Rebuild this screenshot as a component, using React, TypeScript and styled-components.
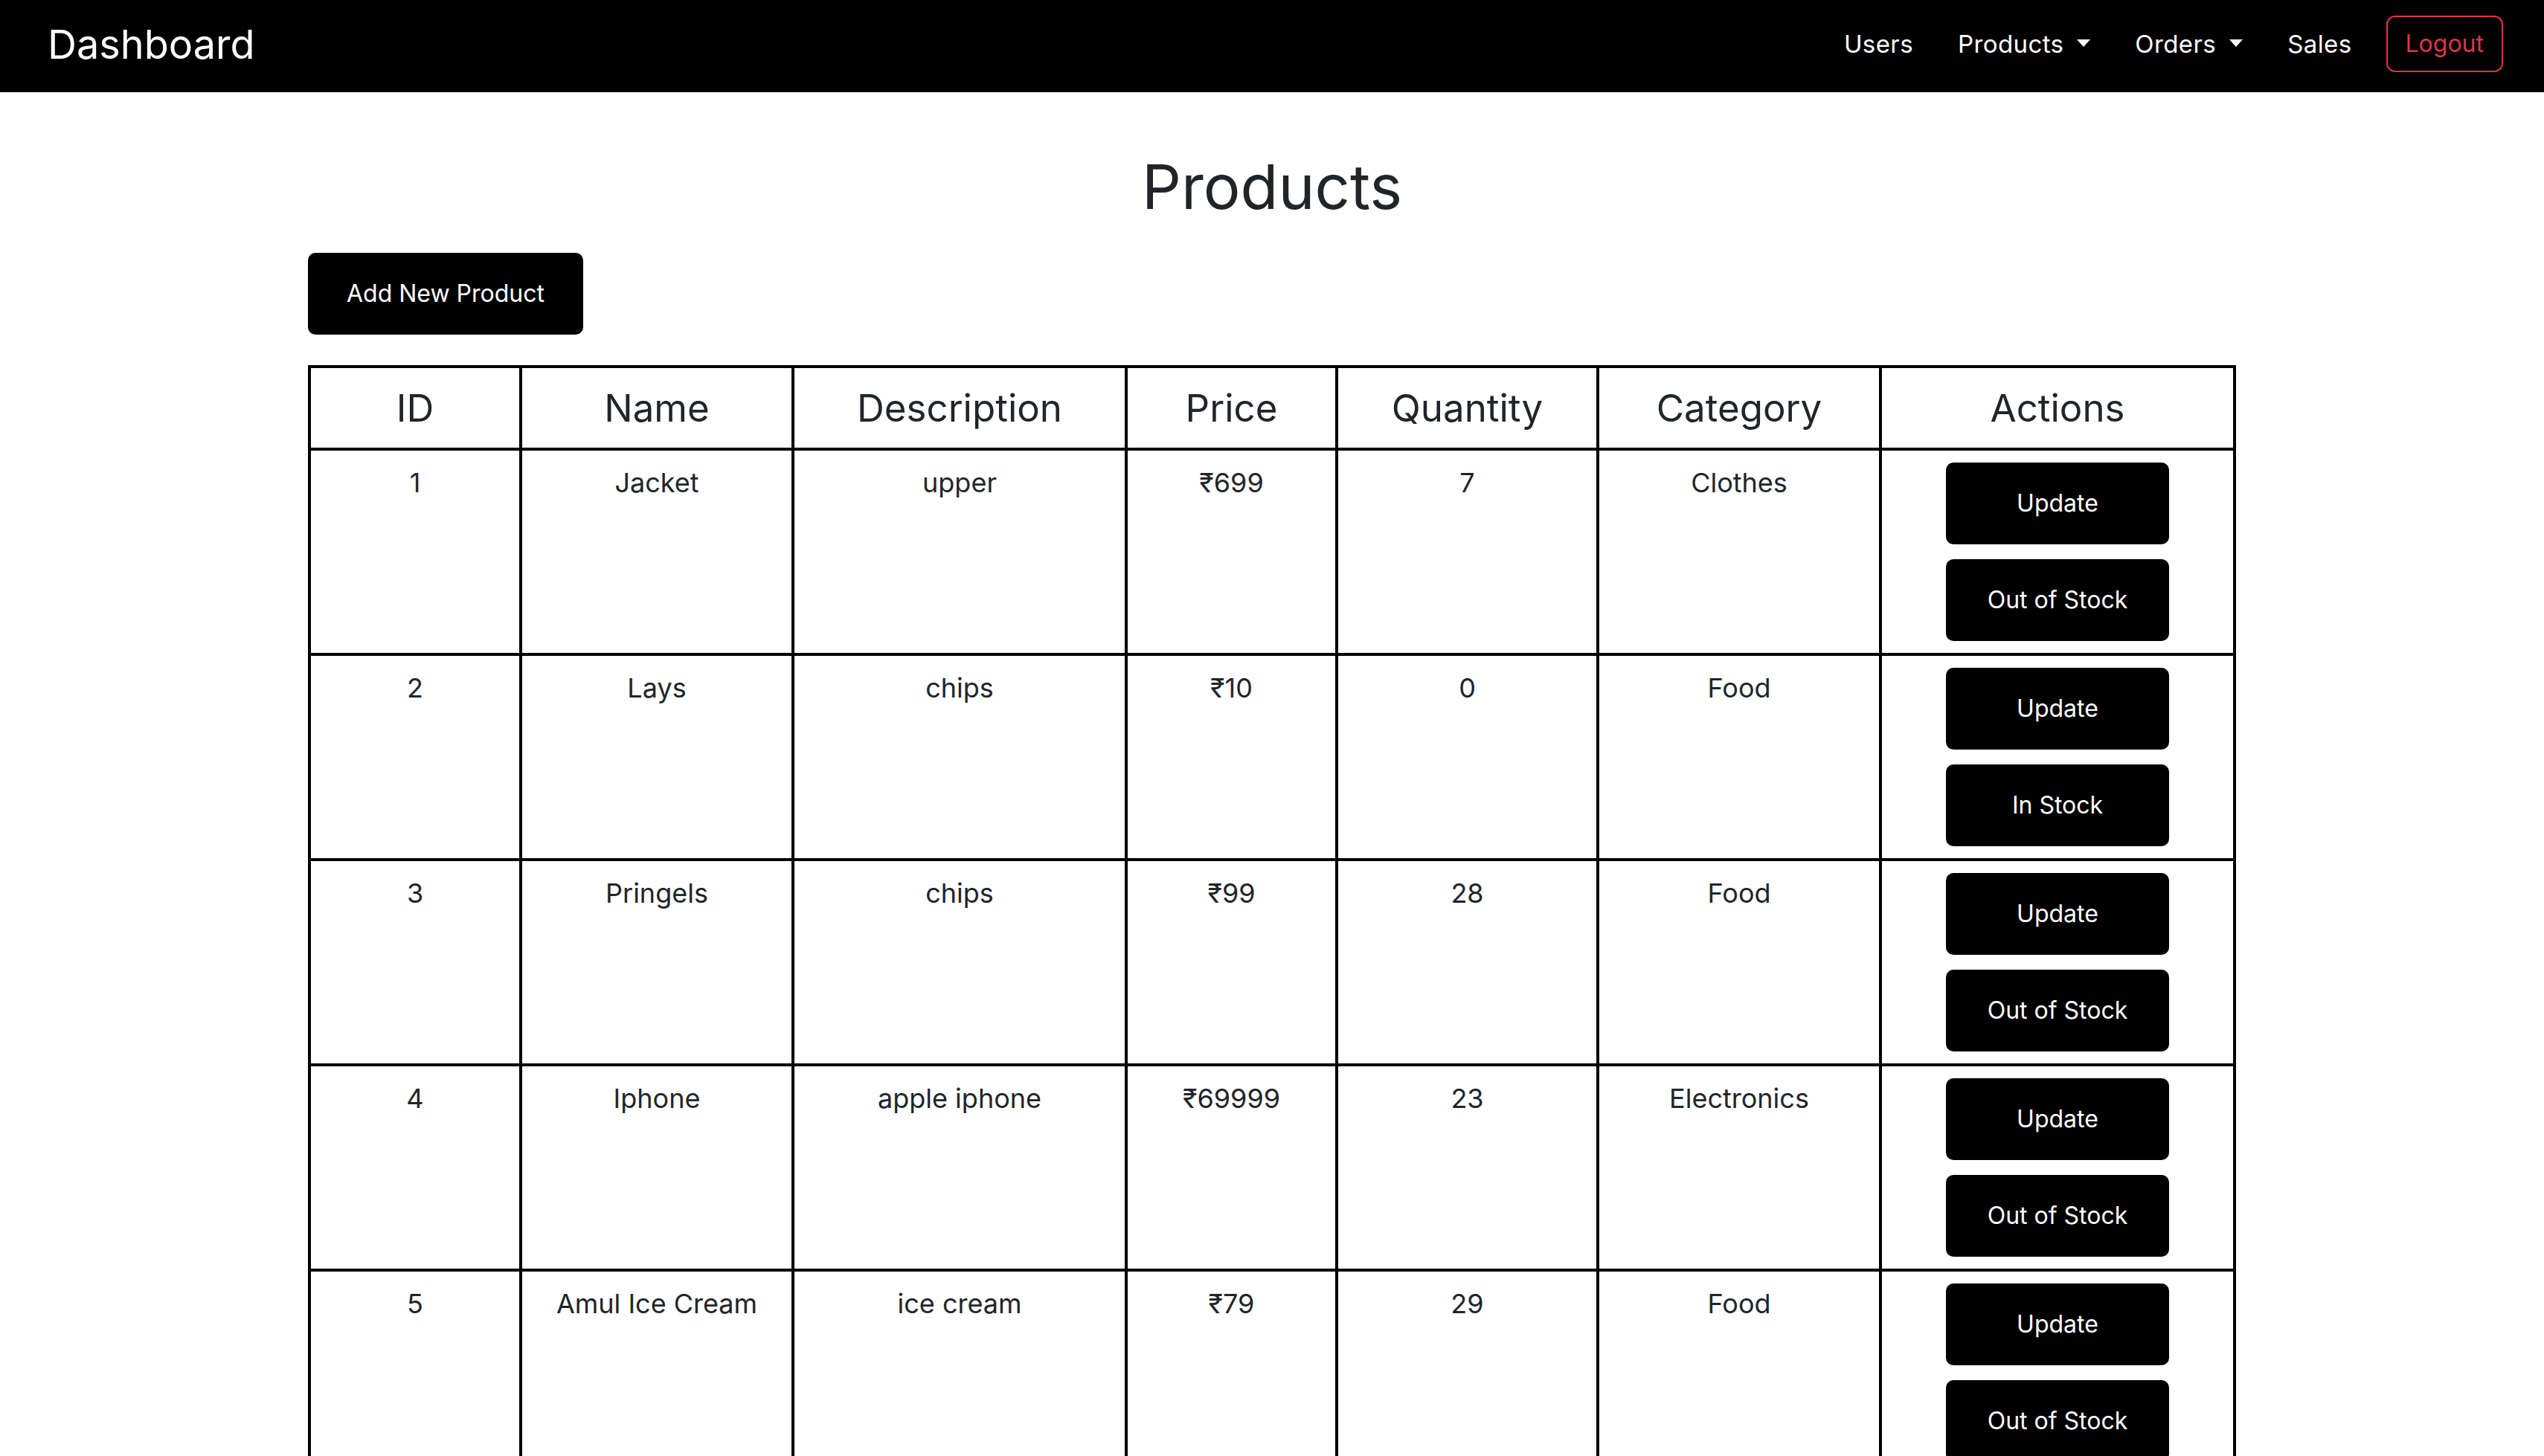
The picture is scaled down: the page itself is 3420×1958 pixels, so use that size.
import React from "react";
import styled, { createGlobalStyle } from "styled-components";

const GlobalStyle = createGlobalStyle`
  html { scrollbar-width: none; }
  html::-webkit-scrollbar, body::-webkit-scrollbar { display: none; }
  body {
    margin: 0;
    background: #ffffff;
    color: #212529;
    font-family: Inter, "Noto Sans", "DejaVu Sans", sans-serif;
  }
  * { box-sizing: border-box; }
`;

const NavBar = styled.nav`
  height: 124px;
  background: #000000;
  display: flex;
  align-items: center;
  justify-content: space-between;
  padding: 0 55px 6px 64px;
`;

const Brand = styled.a`
  color: #ffffff;
  font-size: 54px;
  font-weight: 400;
  line-height: 1.5;
  text-decoration: none;
`;

const RightSide = styled.div`
  display: flex;
  align-items: center;
  gap: 46px;
`;

const NavLinks = styled.ul`
  display: flex;
  align-items: center;
  gap: 60px;
  margin: 0;
  padding: 0;
  list-style: none;
`;

const NavLink = styled.li<{ $dropdown?: boolean }>`
  color: #ffffff;
  font-size: 33px;
  letter-spacing: 0.4px;
  line-height: 48px;
  white-space: nowrap;
  &::after {
    content: "";
    display: ${(p) => (p.$dropdown ? "inline-block" : "none")};
    margin-left: 18px;
    vertical-align: 0.255em;
    border-top: 10px solid #ffffff;
    border-right: 9px solid transparent;
    border-left: 9px solid transparent;
    border-bottom: 0;
  }
`;

const LogoutButton = styled.button`
  font-family: inherit;
  font-size: 32px;
  line-height: 48px;
  padding: 12px 24px;
  color: #dc3545;
  background: transparent;
  border: 2px solid #dc3545;
  border-radius: 12px;
`;

const Container = styled.main`
  width: 2592px;
  margin: 0 auto;
`;

const Title = styled.h1`
  font-size: 83px;
  font-weight: 400;
  line-height: 96px;
  text-align: center;
  margin: 79px 0 41px;
`;

const BlackButton = styled.button<{ $w: number }>`
  width: ${(p) => p.$w}px;
  height: 110px;
  background: #000000;
  color: #ffffff;
  border: none;
  border-radius: 10px;
  font-family: inherit;
  font-size: 32px;
  line-height: 48px;
  padding: 0;
`;

const AddButton = styled(BlackButton)`
  margin-bottom: 41px;
`;

const Table = styled.table`
  width: 2588px;
  border-collapse: collapse;
  border: 4px solid #000000;
  table-layout: fixed;
`;

const HeadCell = styled.th`
  border: 4px solid #000000;
  padding: 16px;
  font-size: 51px;
  font-weight: 400;
  line-height: 75px;
  text-align: center;
`;

const Cell = styled.td`
  border: 4px solid #000000;
  padding: 16px;
  font-size: 36px;
  line-height: 54px;
  text-align: center;
  vertical-align: top;
`;

const Actions = styled.div`
  display: flex;
  flex-direction: column;
  align-items: center;
  gap: 20px;
`;

const columns = [
  { name: "ID", w: 284 },
  { name: "Name", w: 366 },
  { name: "Description", w: 448 },
  { name: "Price", w: 283 },
  { name: "Quantity", w: 351 },
  { name: "Category", w: 380 },
  { name: "Actions", w: 476 },
];

const products = [
  { id: 1, name: "Jacket", desc: "upper", price: 699, qty: 7, cat: "Clothes" },
  { id: 2, name: "Lays", desc: "chips", price: 10, qty: 0, cat: "Food" },
  { id: 3, name: "Pringels", desc: "chips", price: 99, qty: 28, cat: "Food" },
  { id: 4, name: "Iphone", desc: "apple iphone", price: 69999, qty: 23, cat: "Electronics" },
  { id: 5, name: "Amul Ice Cream", desc: "ice cream", price: 79, qty: 29, cat: "Food" },
];

export default function App() {
  return (
    <>
      <GlobalStyle />
      <NavBar>
        <Brand href="#">Dashboard</Brand>
        <RightSide>
          <NavLinks>
            <NavLink>Users</NavLink>
            <NavLink $dropdown>Products</NavLink>
            <NavLink $dropdown>Orders</NavLink>
            <NavLink>Sales</NavLink>
          </NavLinks>
          <LogoutButton>Logout</LogoutButton>
        </RightSide>
      </NavBar>
      <Container>
        <Title>Products</Title>
        <AddButton $w={370}>Add New Product</AddButton>
        <Table>
          <colgroup>
            {columns.map((c) => (
              <col key={c.name} style={{ width: c.w }} />
            ))}
          </colgroup>
          <thead>
            <tr>
              {columns.map((c) => (
                <HeadCell key={c.name}>{c.name}</HeadCell>
              ))}
            </tr>
          </thead>
          <tbody>
            {products.map((p) => (
              <tr key={p.id}>
                <Cell>{p.id}</Cell>
                <Cell>{p.name}</Cell>
                <Cell>{p.desc}</Cell>
                <Cell>₹{p.price}</Cell>
                <Cell>{p.qty}</Cell>
                <Cell>{p.cat}</Cell>
                <Cell>
                  <Actions>
                    <BlackButton $w={300}>Update</BlackButton>
                    <BlackButton $w={300}>{p.qty === 0 ? "In Stock" : "Out of Stock"}</BlackButton>
                  </Actions>
                </Cell>
              </tr>
            ))}
          </tbody>
        </Table>
      </Container>
    </>
  );
}
